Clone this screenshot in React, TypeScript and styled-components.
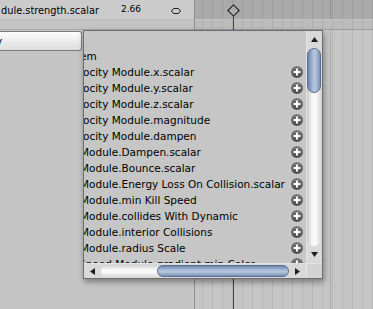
import React from "react";
import styled, { createGlobalStyle } from "styled-components";

const GlobalStyle = createGlobalStyle`
  html, body { margin: 0; padding: 0; background: #c5c5c5; overflow: hidden; }
  body { font-family: "DejaVu Sans", "Liberation Sans", sans-serif; color: #000; }
`;

const stripes = `repeating-linear-gradient(90deg, transparent 0 7px, rgba(0,0,0,0.07) 7px 8px, transparent 8px 10px)`;
const majorLine = `linear-gradient(90deg, transparent 0 135px, rgba(0,0,0,0.13) 135px 136px, transparent 136px)`;

const Screen = styled.div`
  position: relative;
  display: flex;
  width: 373px;
  height: 309px;
  overflow: hidden;
  background: #c5c5c5;
`;

const LeftPane = styled.div`
  width: 194px;
  flex: none;
  display: flex;
  flex-direction: column;
  border-right: 1px solid #8f8f8f;
`;

const PropertyRow = styled.div`
  box-sizing: border-box;
  height: 20px;
  display: grid;
  grid-template-columns: 120px 51px 1fr;
  align-items: center;
  background: #cbcbcb;
  border-bottom: 1px solid #bdbdbd;
`;

const PropertyName = styled.span`
  font-size: 9.8px;
  padding-left: 1px;
  padding-top: 2px;
  white-space: nowrap;
  overflow: hidden;
`;

const PropertyValue = styled.span`
  font-size: 9px;
  padding-left: 1px;
  padding-bottom: 1px;
`;

const CurveIcon = styled.svg`
  display: block;
  margin-top: 3px;
`;

const Band = styled.div<{ $dark?: boolean }>`
  box-sizing: border-box;
  height: 10px;
  background: ${(p) => (p.$dark ? `${stripes}, #bcbcbc` : "#c3c3c3")};
  border-bottom: 1px solid ${(p) => (p.$dark ? "#9b9b9b" : "#a9a9a9")};
`;

const LeftBody = styled.div`
  flex: 1;
  padding-top: 1px;
`;

const DropButton = styled.div`
  box-sizing: border-box;
  width: 82px;
  height: 20px;
  display: flex;
  align-items: center;
  overflow: hidden;
  background: linear-gradient(#fefefe, #ececec 50%, #dedede);
  border: 1px solid #7d7d7d;
  border-left: none;
  border-radius: 0 3px 3px 0;
  font-size: 10.5px;
`;

const ButtonLabel = styled.span`
  margin-left: -4px;
`;

const TimelinePane = styled.div`
  position: relative;
  flex: 1;
  display: flex;
  flex-direction: column;
`;

const TimelineHeader = styled.div`
  box-sizing: border-box;
  height: 20px;
  background: ${stripes}, ${majorLine}, #aaaaaa;
  border-bottom: 1px solid #c2c2c2;
`;

const TimelineBody = styled.div`
  flex: 1;
  background: ${majorLine}, ${stripes}, #c5c5c5;
`;

const Playhead = styled.div`
  position: absolute;
  left: 38px;
  top: 15px;
  bottom: 0;
  width: 1px;
  background: #e00000;
`;

const Keyframe = styled.div`
  position: absolute;
  left: 34px;
  top: 6px;
  width: 7px;
  height: 7px;
  border: 1px solid #111;
  background: #acacac;
  transform: rotate(45deg);
`;

const Popup = styled.div`
  position: absolute;
  left: 83px;
  top: 30px;
  box-sizing: border-box;
  width: 240px;
  height: 249px;
  border: 1px solid #6e6e6e;
  background: #c6c6c6;
  box-shadow: 1px 3px 6px rgba(0, 0, 0, 0.38);
  display: grid;
  grid-template-columns: 222px 16px;
  grid-template-rows: 232px 15px;
`;

const List = styled.div`
  box-sizing: border-box;
  overflow: hidden;
  padding-top: 17px;
`;

const Row = styled.div`
  height: 16px;
  display: grid;
  grid-template-columns: 1fr 12px;
  column-gap: 2px;
  padding-right: 3px;
  align-items: center;
`;

const RowText = styled.div`
  overflow: hidden;
  white-space: nowrap;
  font-size: 10.5px;
  line-height: 16px;
`;

const RowLabel = styled.span<{ $shift: number }>`
  display: inline-block;
  margin-left: ${(p) => p.$shift}px;
`;

const VScroll = styled.div`
  display: flex;
  flex-direction: column;
  background: #d9d9d9;
  border-left: 1px solid #e6e6e6;
  box-sizing: border-box;
`;

const ArrowBox = styled.div<{ $w?: number; $h?: number }>`
  flex: none;
  width: ${(p) => (p.$w ? `${p.$w}px` : "auto")};
  height: ${(p) => (p.$h ? `${p.$h}px` : "auto")};
  display: flex;
  align-items: center;
  justify-content: center;
`;

const VTrack = styled.div`
  flex: 1;
  margin: 0 1px 0 0;
  border-radius: 7px;
  background: linear-gradient(90deg, #c8c8c8, #f4f4f4 35%, #fbfbfb 60%, #d6d6d6);
  display: flex;
  flex-direction: column;
`;

const VThumb = styled.div`
  height: 45px;
  border-radius: 7px;
  box-sizing: border-box;
  border: 1px solid #5a6f92;
  background: linear-gradient(90deg, #6c84aa, #a9bbd6 40%, #b6c6de 60%, #7a92b6);
`;

const HScroll = styled.div`
  display: flex;
  align-items: stretch;
  background: #d9d9d9;
  border-top: 1px solid #e2e2e2;
  box-sizing: border-box;
`;

const HTrack = styled.div`
  flex: 1;
  margin: 1px 0;
  border-radius: 7px;
  background: linear-gradient(#cfcfcf, #f6f6f6 35%, #fcfcfc 60%, #d8d8d8);
  display: flex;
  justify-content: flex-end;
`;

const HThumb = styled.div`
  width: 132px;
  border-radius: 7px;
  box-sizing: border-box;
  border: 1px solid #5a6f92;
  background: linear-gradient(#6f87ad, #aabcd7 40%, #b5c5dd 60%, #7890b4);
`;

const Corner = styled.div`
  background: #d3d3d3;
  border-top: 1px solid #e2e2e2;
  border-left: 1px solid #e6e6e6;
`;

type Dir = "up" | "down" | "left" | "right";

const Arrow = ({ dir }: { dir: Dir }) => {
  const pts: Record<Dir, string> = {
    up: "0,5 7,5 3.5,0",
    down: "0,0 7,0 3.5,5",
    left: "5,0 5,7 0,3.5",
    right: "0,0 0,7 5,3.5",
  };
  const horiz = dir === "left" || dir === "right";
  return (
    <svg width={horiz ? 5 : 7} height={horiz ? 7 : 5} viewBox={horiz ? "0 0 5 7" : "0 0 7 5"}>
      <polygon points={pts[dir]} fill="#1e1e1e" />
    </svg>
  );
};

const PlusIcon = () => (
  <svg width="12" height="12" viewBox="0 0 12 12" style={{ display: "block" }}>
    <defs>
      <linearGradient id="pg" x1="0" y1="0" x2="0" y2="1">
        <stop offset="0" stopColor="#7a7a7a" />
        <stop offset="1" stopColor="#4e4e4e" />
      </linearGradient>
    </defs>
    <circle cx="6" cy="6" r="6" fill="url(#pg)" />
    <path d="M6 2.6V9.4M2.6 6H9.4" stroke="#fff" strokeWidth="2" />
  </svg>
);

const items: { text: string; shift: number; plus: boolean }[] = [
  { text: "em", shift: -4, plus: false },
  { text: "ocity Module.x.scalar", shift: -1, plus: true },
  { text: "ocity Module.y.scalar", shift: -1, plus: true },
  { text: "ocity Module.z.scalar", shift: -1, plus: true },
  { text: "ocity Module.magnitude", shift: -1, plus: true },
  { text: "ocity Module.dampen", shift: -1, plus: true },
  { text: "Module.Dampen.scalar", shift: -4, plus: true },
  { text: "Module.Bounce.scalar", shift: -4, plus: true },
  { text: "Module.Energy Loss On Collision.scalar", shift: -4, plus: true },
  { text: "Module.min Kill Speed", shift: -4, plus: true },
  { text: "Module.collides With Dynamic", shift: -4, plus: true },
  { text: "Module.interior Collisions", shift: -4, plus: true },
  { text: "Module.radius Scale", shift: -4, plus: true },
  { text: "Speed Module.gradient.min Color", shift: -5, plus: true },
];

export default function App() {
  return (
    <>
      <GlobalStyle />
      <Screen>
        <LeftPane>
          <PropertyRow>
            <PropertyName>dule.strength.scalar</PropertyName>
            <PropertyValue>2.66</PropertyValue>
            <CurveIcon width="10" height="6" viewBox="0 0 10 6">
              <path d="M2.5 0.5H7.5L9.5 3L7.5 5.5H2.5L0.5 3Z" fill="none" stroke="#222" strokeWidth="1" />
            </CurveIcon>
          </PropertyRow>
          <Band />
          <LeftBody>
            <DropButton>
              <ButtonLabel>y</ButtonLabel>
            </DropButton>
          </LeftBody>
        </LeftPane>
        <TimelinePane>
          <TimelineHeader />
          <Band $dark />
          <TimelineBody />
          <Playhead />
          <Keyframe />
        </TimelinePane>
        <Popup>
          <List>
            {items.map((it, i) => (
              <Row key={i}>
                <RowText>
                  <RowLabel $shift={it.shift}>{it.text}</RowLabel>
                </RowText>
                {it.plus ? <PlusIcon /> : <span />}
              </Row>
            ))}
          </List>
          <VScroll>
            <ArrowBox $h={17}>
              <Arrow dir="up" />
            </ArrowBox>
            <VTrack>
              <VThumb />
            </VTrack>
            <ArrowBox $h={17}>
              <Arrow dir="down" />
            </ArrowBox>
          </VScroll>
          <HScroll>
            <ArrowBox $w={17}>
              <Arrow dir="left" />
            </ArrowBox>
            <HTrack>
              <HThumb />
            </HTrack>
            <ArrowBox $w={17}>
              <Arrow dir="right" />
            </ArrowBox>
          </HScroll>
          <Corner />
        </Popup>
      </Screen>
    </>
  );
}
